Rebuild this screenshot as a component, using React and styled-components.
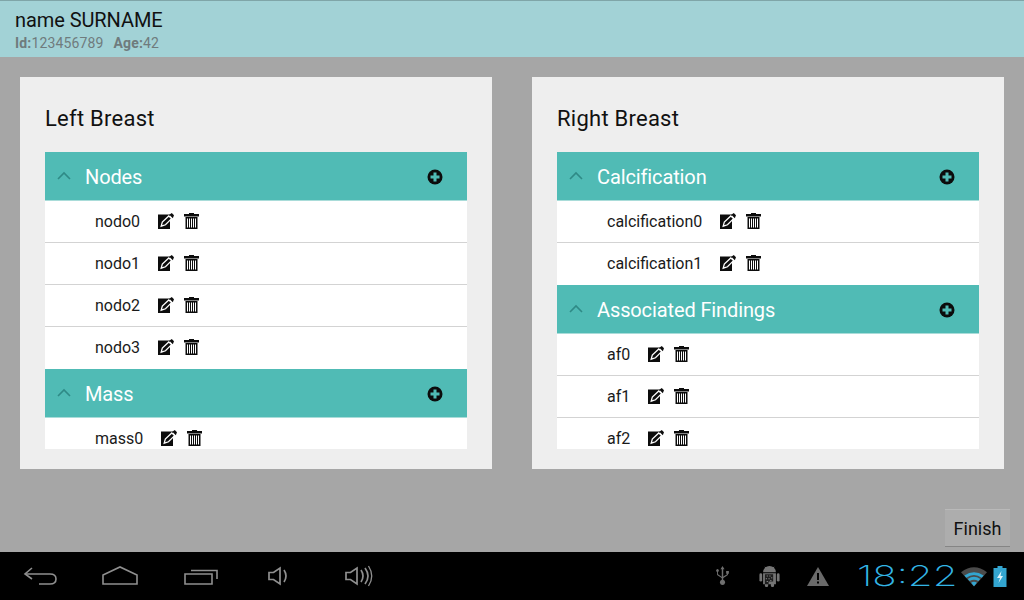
import React from 'react'
import styled, { createGlobalStyle } from 'styled-components'

const GlobalStyle = createGlobalStyle`
  html, body {
    margin: 0;
    padding: 0;
    background: #a6a6a6;
    font-family: Roboto, "Liberation Sans", sans-serif;
  }
`

const Screen = styled.div`
  display: flex;
  flex-direction: column;
  width: 1024px;
  height: 600px;
  overflow: hidden;
`

const TopBar = styled.header`
  box-sizing: border-box;
  height: 57px;
  padding: 8px 15px 0;
  background: #a2d2d6;
  border-top: 1px solid #7fa5a8;
`

const PatientName = styled.div`
  font-size: 20px;
  line-height: 23px;
  letter-spacing: -0.08px;
  color: #111;
`

const PatientInfo = styled.div`
  display: flex;
  gap: 10px;
  margin-top: 3px;
  font-size: 14px;
  line-height: 16px;
  letter-spacing: 0.15px;
  color: #6f7b7d;
  b { font-weight: 700; }
`

const Content = styled.main`
  flex: 1;
  display: flex;
  flex-direction: column;
  padding: 20px 14px 5px 20px;
`

const Cards = styled.div`
  display: flex;
  gap: 40px;
`

const Card = styled.section`
  box-sizing: border-box;
  width: 472px;
  height: 392px;
  padding: 27px 25px 20px;
  background: #eeeeee;
  display: flex;
  flex-direction: column;
`

const CardTitle = styled.h2`
  margin: 0 0 19px;
  font-size: 22px;
  line-height: 29px;
  font-weight: 400;
  letter-spacing: 0.25px;
  color: #111;
`

const List = styled.div`
  flex: 1;
  overflow: hidden;
  background: #fff;
`

const GroupHeader = styled.div`
  display: flex;
  align-items: center;
  box-sizing: content-box;
  height: 48px;
  padding: 0 24px 0 11px;
  background: #50bbb5;
  border-bottom: 1px solid #a9dcd9;
`

const GroupTitle = styled.span`
  flex: 1;
  margin-left: 13px;
  padding-top: 2px;
  font-size: 20px;
  letter-spacing: -0.12px;
  color: #fff;
`

const AddSlot = styled.span`
  display: flex;
  margin-top: 1px;
`

const Row = styled.div`
  box-sizing: border-box;
  display: flex;
  align-items: center;
  height: 42px;
  padding: 0 0 0 50px;
  border-bottom: 1px solid ${p => (p.$last ? '#fff' : '#d3d3d3')};
  font-size: 16px;
  color: #1a1a1a;
`

const RowActions = styled.span`
  display: flex;
  gap: 10px;
  margin: 0 0 2px 18px;
`

const ButtonBar = styled.div`
  margin-top: auto;
  display: flex;
  justify-content: flex-end;
`

const FinishButton = styled.button`
  width: 65px;
  height: 38px;
  padding: 0;
  background: #adadad;
  border: 0;
  border-top: 1px solid #b9b9b9;
  border-bottom: 1px solid #858585;
  font: 400 18px Roboto, sans-serif;
  color: #111;
`

const NavBar = styled.footer`
  display: flex;
  align-items: center;
  height: 48px;
  padding: 0 17px 0 23px;
  background: #000;
`

const NavIcons = styled.div`
  flex: 1;
  display: flex;
  align-items: center;
`

const NavSlot = styled.span`
  display: flex;
  margin-left: ${p => p.$gap || 0}px;
`

const StatusArea = styled.div`
  display: flex;
  align-items: center;
`

const Clock = styled.span`
  display: inline-block;
  width: 100px;
  margin: 0 4px 0 28px;
  font-family: Inter, Roboto, sans-serif;
  font-weight: 200;
  font-size: 28px;
  line-height: 30px;
  color: #33b5e5;
  transform: scaleX(1.44);
  transform-origin: left center;
  white-space: nowrap;
`

const Chevron = () => (
  <svg width="16" height="10" viewBox="0 0 16 10">
    <path d="M2 8 L8 2 L14 8" fill="none" stroke="#2f8a86" strokeWidth="1.6" />
  </svg>
)

const AddIcon = () => (
  <svg width="16" height="16" viewBox="0 0 16 16">
    <circle cx="8" cy="8" r="7.5" fill="#0c0c0c" />
    <path d="M6.5 3.5h3v3h3v3h-3v3h-3v-3h-3v-3h3z" fill="#50bbb5" />
  </svg>
)

const EditIcon = () => (
  <svg width="16" height="16" viewBox="0 0 16 16">
    <path d="M0 1.500h12V16H0z" fill="#0c0c0c" />
    <path d="M3.200 13.200 L4.300 9 L10.800 3 L13.600 5.600 L7.500 11.800z" fill="#0c0c0c" stroke="#fff" strokeWidth="1.300" />
    <path d="M11.300 1.800 L13.800 0 L16 2.200 L14.800 5.200z" fill="#0c0c0c" />
  </svg>
)

const TrashIcon = () => (
  <svg width="15" height="16" viewBox="0 0 15 16">
    <path d="M5 0h5v1h5v2.500H0V1h5z" fill="#0c0c0c" />
    <path d="M1.500 4h12v12h-12z" fill="#0c0c0c" />
    <path d="M3.500 5.500v9M5.500 5.500v9M7.500 5.500v9M9.500 5.500v9M11.500 5.500v9" stroke="#fff" strokeWidth="1" />
  </svg>
)

const BackIcon = () => (
  <svg width="34" height="20" viewBox="0 0 34 20" fill="none" stroke="#8f8f8f" strokeWidth="1.6">
    <path d="M9 2 L2 8 L9 13" />
    <path d="M2 8 H27 Q33 8 33 13 Q33 18 27 18 H16" />
  </svg>
)

const HomeIcon = () => (
  <svg width="36" height="20" viewBox="0 0 36 20" fill="none" stroke="#8f8f8f" strokeWidth="1.6">
    <path d="M1 18 V9 L18 1 L35 9 V18z" />
  </svg>
)

const RecentIcon = () => (
  <svg width="34" height="18" viewBox="0 0 34 18" fill="none" stroke="#8f8f8f" strokeWidth="1.6">
    <path d="M1 7h27v10H1z" />
    <path d="M7 3.500 H33 V12" />
  </svg>
)

const VolumeIcon = ({ loud }) => (
  <svg width={loud ? 28 : 21} height="24" viewBox={loud ? '0 0 28 24' : '0 0 21 24'} fill="none" stroke="#8f8f8f" strokeWidth="1.7">
    <path d="M1 8.500h4.500L12 4v16L5.500 15.500H1z" />
    <path d="M16 6 Q20 12 16 18" />
    {loud && <path d="M20 4 Q26 12 20 20" />}
    {loud && <path d="M23.500 2 Q30 12 23.500 22" strokeWidth="1.300" />}
  </svg>
)

const UsbIcon = () => (
  <svg width="15" height="20" viewBox="0 0 16 22" fill="#6f6f6f">
    <path d="M8 0l2.200 3.500H8.800V15.500H7.200V3.500H5.800z" />
    <circle cx="8" cy="18" r="2.800" />
    <path d="M2 6.500a1.500 1.500 0 1 1 1 0V9l4.500 3v1.600L2 10z" />
    <path d="M12 5.500h3v3h-1v1.500L8.500 13.500v-1.600L13 9V8.500h-1z" />
  </svg>
)

const AndroidIcon = () => (
  <svg width="21" height="22" viewBox="0 0 22 24">
    <path d="M4 8 A7 7 0 0 1 18 8z" fill="#757575" />
    <path d="M6 2l2 2.500M16 2l-2 2.500" stroke="#757575" strokeWidth="1" />
    <rect x="0" y="9" width="3" height="9" rx="1.500" fill="#757575" />
    <rect x="19" y="9" width="3" height="9" rx="1.500" fill="#757575" />
    <rect x="4" y="9" width="14" height="12" fill="#757575" />
    <rect x="6" y="18" width="3.500" height="6" rx="1.500" fill="#757575" />
    <rect x="12.500" y="18" width="3.500" height="6" rx="1.500" fill="#757575" />
    <path d="M6 10h9v8h-5v3H6z" fill="#1e1e1e" />
    <path d="M8 12h1M11 12h1M13 14h1M7 15h1M10 15h1M8 18h1M12 17h1" stroke="#bbb" strokeWidth="1" />
  </svg>
)

const WarningIcon = () => (
  <svg width="22" height="19" viewBox="0 0 22 19">
    <path d="M11 0 L22 19 H0z" fill="#6a6a6a" />
    <path d="M10 6h2v7h-2zM10 14.500h2v2h-2z" fill="#000" />
  </svg>
)

const WifiIcon = () => (
  <svg width="26" height="21" viewBox="0 0 27 21">
    <path d="M0 6 Q13.500 -4 27 6 L13.500 21z" fill="#4a4a4a" />
    <path d="M3.500 9.500 Q13.500 2.500 23.500 9.500 L21.500 11.700 Q13.500 6 5.500 11.700z" fill="#33a5d0" />
    <path d="M7 13 Q13.500 8.500 20 13 L18 15.300 Q13.500 12.300 9 15.300z" fill="#33a5d0" />
    <path d="M10.500 17 Q13.500 15 16.500 17 L13.500 20.500z" fill="#33a5d0" />
  </svg>
)

const BatteryIcon = () => (
  <svg width="14" height="21" viewBox="0 0 14 21">
    <path d="M4.500 0h5v2h4v19H0.500V2h4z" fill="#33a5d0" />
    <path d="M8.500 5 L4 12 H7 L5.500 17 L10 10 H7.500z" fill="#dff3fb" />
  </svg>
)

const Group = ({ title, items }) => (
  <>
    <GroupHeader>
      <Chevron />
      <GroupTitle>{title}</GroupTitle>
      <AddSlot><AddIcon /></AddSlot>
    </GroupHeader>
    {items.map((item, i) => (
      <Row key={item} $last={i === items.length - 1}>
        {item}
        <RowActions>
          <EditIcon />
          <TrashIcon />
        </RowActions>
      </Row>
    ))}
  </>
)

const App = () => {
  return (
    <Screen>
      <GlobalStyle />
      <TopBar>
        <PatientName>name SURNAME</PatientName>
        <PatientInfo>
          <span><b>Id:</b>123456789</span>
          <span><b>Age:</b>42</span>
        </PatientInfo>
      </TopBar>
      <Content>
        <Cards>
          <Card>
            <CardTitle>Left Breast</CardTitle>
            <List>
              <Group title='Nodes' items={['nodo0', 'nodo1', 'nodo2', 'nodo3']} />
              <Group title='Mass' items={['mass0']} />
            </List>
          </Card>
          <Card>
            <CardTitle>Right Breast</CardTitle>
            <List>
              <Group title='Calcification' items={['calcification0', 'calcification1']} />
              <Group title='Associated Findings' items={['af0', 'af1', 'af2']} />
            </List>
          </Card>
        </Cards>
        <ButtonBar>
          <FinishButton>Finish</FinishButton>
        </ButtonBar>
      </Content>
      <NavBar>
        <NavIcons>
          <NavSlot><BackIcon /></NavSlot>
          <NavSlot $gap={45}><HomeIcon /></NavSlot>
          <NavSlot $gap={46}><RecentIcon /></NavSlot>
          <NavSlot $gap={50}><VolumeIcon /></NavSlot>
          <NavSlot $gap={56}><VolumeIcon loud /></NavSlot>
        </NavIcons>
        <StatusArea>
          <NavSlot><UsbIcon /></NavSlot>
          <NavSlot $gap={29}><AndroidIcon /></NavSlot>
          <NavSlot $gap={27}><WarningIcon /></NavSlot>
          <Clock>18:22</Clock>
          <NavSlot><WifiIcon /></NavSlot>
          <NavSlot $gap={6}><BatteryIcon /></NavSlot>
        </StatusArea>
      </NavBar>
    </Screen>
  )
}

export default App
